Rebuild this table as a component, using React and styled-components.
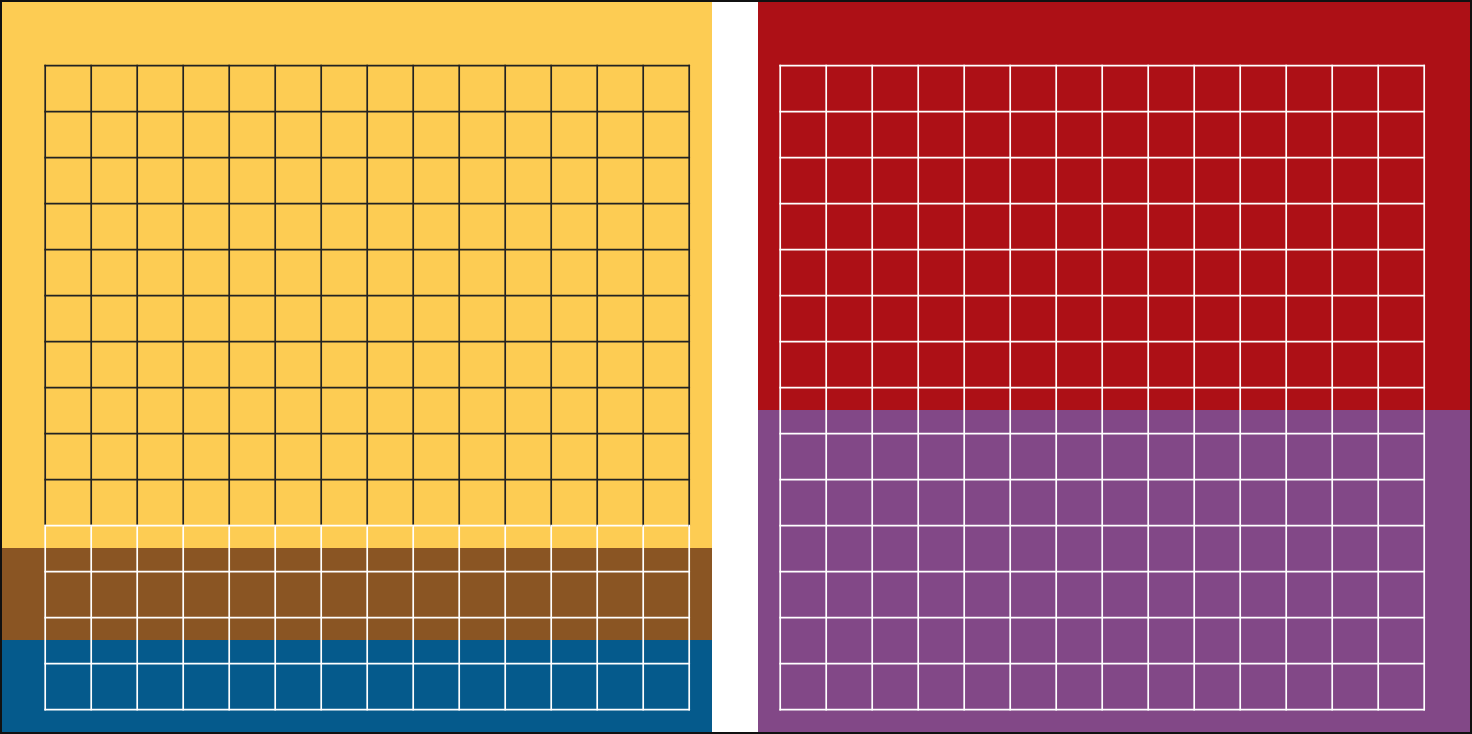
import React from 'react';
import styled, { createGlobalStyle } from 'styled-components';

const CELL = 46;
const COUNT = 14;

const GlobalStyle = createGlobalStyle`
  html, body {
    margin: 0;
    padding: 0;
    background: #fff;
    font-family: 'Liberation Sans', Arial, sans-serif;
  }
`;

function GridSheet({ splitRow = COUNT, topColor, bottomColor }) {
  const size = CELL * COUNT + 3;
  const x0 = 1.2;
  const y0 = 1.6;
  const splitY = y0 + CELL * splitRow;
  const xEnd = x0 + CELL * COUNT;
  const yEnd = y0 + CELL * COUNT;
  const lines = [];

  for (let i = 0; i <= COUNT; i++) {
    const x = x0 + CELL * i;
    const y = y0 + CELL * i;
    // vertical lines, split where the colour changes
    if (splitRow > 0) {
      lines.push(<line key={`vt${i}`} x1={x} y1={y0} x2={x} y2={splitY} stroke={topColor} />);
    }
    if (splitRow < COUNT) {
      lines.push(<line key={`vb${i}`} x1={x} y1={splitY} x2={x} y2={yEnd} stroke={bottomColor} />);
    }
    const color = i < splitRow ? topColor : bottomColor;
    lines.push(<line key={`h${i}`} x1={x0} y1={y} x2={xEnd} y2={y} stroke={color} />);
  }

  return (
    <Sheet width={size} height={size} viewBox={`0 0 ${size} ${size}`}>
      <g strokeWidth="1.7" strokeLinecap="square">{lines}</g>
    </Sheet>
  );
}

function App() {
  return (
    <>
      <GlobalStyle />
      <Frame>
        <Panel $side='left'>
          <GridSheet splitRow={10} topColor='#222' bottomColor='#fff' />
        </Panel>
        <Gutter />
        <Panel $side='right'>
          <GridSheet splitRow={0} topColor='#fff' bottomColor='#fff' />
        </Panel>
      </Frame>
    </>
  );
}

const Frame = styled.div`
  width: 1472px;
  height: 734px;
  box-sizing: border-box;
  border: 2px solid #111;
  display: flex;
  overflow: hidden;
`;

const Panel = styled.div`
  flex: ${(p) => (p.$side === 'left' ? '0 0 710px' : '1 1 auto')};
  height: 100%;
  box-sizing: border-box;
  padding: 62px 0 0 ${(p) => (p.$side === 'left' ? '42px' : '21px')};
  background: ${(p) =>
    p.$side === 'left'
      ? 'linear-gradient(to bottom, #fdcc53 0 546px, #8a5523 546px 638px, #055a8c 638px)'
      : 'linear-gradient(to bottom, #ad1016 0 408px, #824887 408px)'};
`;

const Gutter = styled.div`
  flex: 0 0 46px;
  background: #fff;
`;

const Sheet = styled.svg`
  display: block;
  overflow: visible;
`;

export default App;
